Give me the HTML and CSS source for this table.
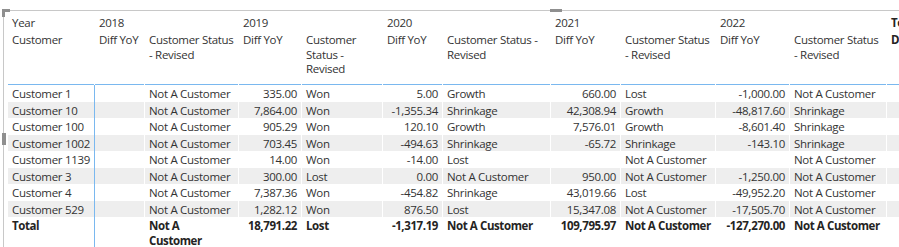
FILE: index.html
```html
<!DOCTYPE html>
<html>
<head>
<meta charset="utf-8">
<link rel="stylesheet" href="styles.css">
</head>
<body>
<div class="visual">
  <div class="frame">
    <div class="matrix">
      <div class="row head1">
        <div class="c c0">Year</div>
        <div class="c y18">2018</div>
        <div class="c y19">2019</div>
        <div class="c y20">2020</div>
        <div class="c y21">2021</div>
        <div class="c y22">2022</div>
        <div class="c c11 b">Total</div>
      </div>
      <div class="row head2">
        <div class="c c0">Customer</div>
        <div class="c c1">Diff YoY</div>
        <div class="c c2">Customer Status<br>- Revised</div>
        <div class="c c3">Diff YoY</div>
        <div class="c c4">Customer<br>Status -<br>Revised</div>
        <div class="c c5">Diff YoY</div>
        <div class="c c6">Customer Status -<br>Revised</div>
        <div class="c c7">Diff YoY</div>
        <div class="c c8">Customer Status<br>- Revised</div>
        <div class="c c9">Diff YoY</div>
        <div class="c c10">Customer Status<br>- Revised</div>
        <div class="c c11 b">Diff YoY</div>
      </div>

      <div class="row data">
        <div class="c c0">Customer 1</div>
        <div class="c c1 n"></div><div class="c c2">Not A Customer</div>
        <div class="c c3 n">335.00</div><div class="c c4">Won</div>
        <div class="c c5 n">5.00</div><div class="c c6">Growth</div>
        <div class="c c7 n">660.00</div><div class="c c8">Lost</div>
        <div class="c c9 n">-1,000.00</div><div class="c c10">Not A Customer</div>
        <div class="c c11"></div>
      </div>
      <div class="row data alt">
        <div class="c c0">Customer 10</div>
        <div class="c c1 n"></div><div class="c c2">Not A Customer</div>
        <div class="c c3 n">7,864.00</div><div class="c c4">Won</div>
        <div class="c c5 n">-1,355.34</div><div class="c c6">Shrinkage</div>
        <div class="c c7 n">42,308.94</div><div class="c c8">Growth</div>
        <div class="c c9 n">-48,817.60</div><div class="c c10">Shrinkage</div>
        <div class="c c11"></div>
      </div>
      <div class="row data">
        <div class="c c0">Customer 100</div>
        <div class="c c1 n"></div><div class="c c2">Not A Customer</div>
        <div class="c c3 n">905.29</div><div class="c c4">Won</div>
        <div class="c c5 n">120.10</div><div class="c c6">Growth</div>
        <div class="c c7 n">7,576.01</div><div class="c c8">Growth</div>
        <div class="c c9 n">-8,601.40</div><div class="c c10">Shrinkage</div>
        <div class="c c11"></div>
      </div>
      <div class="row data alt">
        <div class="c c0">Customer 1002</div>
        <div class="c c1 n"></div><div class="c c2">Not A Customer</div>
        <div class="c c3 n">703.45</div><div class="c c4">Won</div>
        <div class="c c5 n">-494.63</div><div class="c c6">Shrinkage</div>
        <div class="c c7 n">-65.72</div><div class="c c8">Shrinkage</div>
        <div class="c c9 n">-143.10</div><div class="c c10">Shrinkage</div>
        <div class="c c11"></div>
      </div>
      <div class="row data">
        <div class="c c0">Customer 1139</div>
        <div class="c c1 n"></div><div class="c c2">Not A Customer</div>
        <div class="c c3 n">14.00</div><div class="c c4">Won</div>
        <div class="c c5 n">-14.00</div><div class="c c6">Lost</div>
        <div class="c c7 n"></div><div class="c c8">Not A Customer</div>
        <div class="c c9 n"></div><div class="c c10">Not A Customer</div>
        <div class="c c11"></div>
      </div>
      <div class="row data alt">
        <div class="c c0">Customer 3</div>
        <div class="c c1 n"></div><div class="c c2">Not A Customer</div>
        <div class="c c3 n">300.00</div><div class="c c4">Lost</div>
        <div class="c c5 n">0.00</div><div class="c c6">Not A Customer</div>
        <div class="c c7 n">950.00</div><div class="c c8">Not A Customer</div>
        <div class="c c9 n">-1,250.00</div><div class="c c10">Not A Customer</div>
        <div class="c c11"></div>
      </div>
      <div class="row data">
        <div class="c c0">Customer 4</div>
        <div class="c c1 n"></div><div class="c c2">Not A Customer</div>
        <div class="c c3 n">7,387.36</div><div class="c c4">Won</div>
        <div class="c c5 n">-454.82</div><div class="c c6">Shrinkage</div>
        <div class="c c7 n">43,019.66</div><div class="c c8">Lost</div>
        <div class="c c9 n">-49,952.20</div><div class="c c10">Not A Customer</div>
        <div class="c c11"></div>
      </div>
      <div class="row data alt">
        <div class="c c0">Customer 529</div>
        <div class="c c1 n"></div><div class="c c2">Not A Customer</div>
        <div class="c c3 n">1,282.12</div><div class="c c4">Won</div>
        <div class="c c5 n">876.50</div><div class="c c6">Lost</div>
        <div class="c c7 n">15,347.08</div><div class="c c8">Not A Customer</div>
        <div class="c c9 n">-17,505.70</div><div class="c c10">Not A Customer</div>
        <div class="c c11"></div>
      </div>
      <div class="row total">
        <div class="c c0">Total</div>
        <div class="c c1 n"></div><div class="c c2">Not A<br>Customer</div>
        <div class="c c3 n">18,791.22</div><div class="c c4">Lost</div>
        <div class="c c5 n">-1,317.19</div><div class="c c6">Not A Customer</div>
        <div class="c c7 n">109,795.97</div><div class="c c8">Not A Customer</div>
        <div class="c c9 n">-127,270.00</div><div class="c c10">Not A Customer</div>
        <div class="c c11"></div>
      </div>
    </div>
  </div>
  <div class="handle h-corner-top"></div>
  <div class="handle h-corner-left"></div>
  <div class="handle h-top"></div>
  <div class="handle h-left"></div>
</div>
</body>
</html>
```
FILE: styles.css
```css
html, body {
  margin: 0;
  padding: 0;
  background: #ffffff;
  overflow: hidden;
}

body {
  font-family: "Open Sans", "Noto Sans", sans-serif;
  font-size: 11.5px;
  letter-spacing: -0.3px;
  color: #333333;
  width: 899px;
  height: 247px;
}

.visual {
  position: relative;
  box-sizing: border-box;
  width: 899px;
  height: 247px;
  padding: 10px 0 0 3px;
}

.frame {
  height: 237px;
  box-sizing: border-box;
  border-top: 1px solid #c8c8c8;
  border-left: 1px solid #c8c8c8;
  padding-left: 4px;
  overflow: hidden;
}

.matrix {
  display: flex;
  flex-direction: column;
  width: max-content;
}

.row {
  display: flex;
}

.c {
  box-sizing: border-box;
  flex: 0 0 auto;
  padding: 0 4px;
  white-space: nowrap;
}

.c0 { width: 87px; }
.c1 { width: 50px; }
.c2 { width: 94px; }
.c3 { width: 63px; }
.c4 { width: 81px; }
.c5 { width: 60px; }
.c6 { width: 108px; }
.c7 { width: 70px; }
.c8 { width: 95px; }
.c9 { width: 74px; }
.c10 { width: 97px; }
.c11 { width: 80px; }

.y18 { width: 144px; }
.y19 { width: 144px; }
.y20 { width: 168px; }
.y21 { width: 165px; }
.y22 { width: 171px; }

.n { text-align: right; }

.b {
  font-weight: 700;
  letter-spacing: -0.4px;
  color: #252423;
}

/* header rows */
.head1 {
  height: 19px;
}
.head1 .c {
  padding-top: 4.5px;
  line-height: 14.5px;
}

.head2 {
  height: 55px;
}
.head2 .c {
  padding-top: 3px;
  line-height: 14.5px;
  background: linear-gradient(#7ab8ef, #7ab8ef) left bottom / calc(100% - 1px) 1px no-repeat;
}

/* body rows */
.data {
  height: 16.5px;
}
.data .c {
  height: 16.5px;
  padding-top: 1px;
  line-height: 15.9px;
  border-right: 1px solid #ffffff;
}
.data.alt {
  background: #eeeeee;
}
.data .c0,
.total .c0 {
  border-right: 1px solid #7ab8ef;
}

.total .c {
  padding-top: 0.5px;
  line-height: 15px;
  font-weight: 700;
  letter-spacing: -0.4px;
  color: #252423;
  height: 40px;
}
.total .c:not(.c0) {
  border-right: 1px solid #ffffff;
}

/* selection handles of the visual */
.handle {
  position: absolute;
  background: #8f8f8f;
}
.h-corner-top { left: 2px; top: 9px; width: 8px; height: 3px; }
.h-corner-left { left: 2px; top: 9px; width: 3px; height: 8px; }
.h-top { left: 550px; top: 9px; width: 12px; height: 3px; }
.h-left { left: 2px; top: 133px; width: 4px; height: 12px; }
```
